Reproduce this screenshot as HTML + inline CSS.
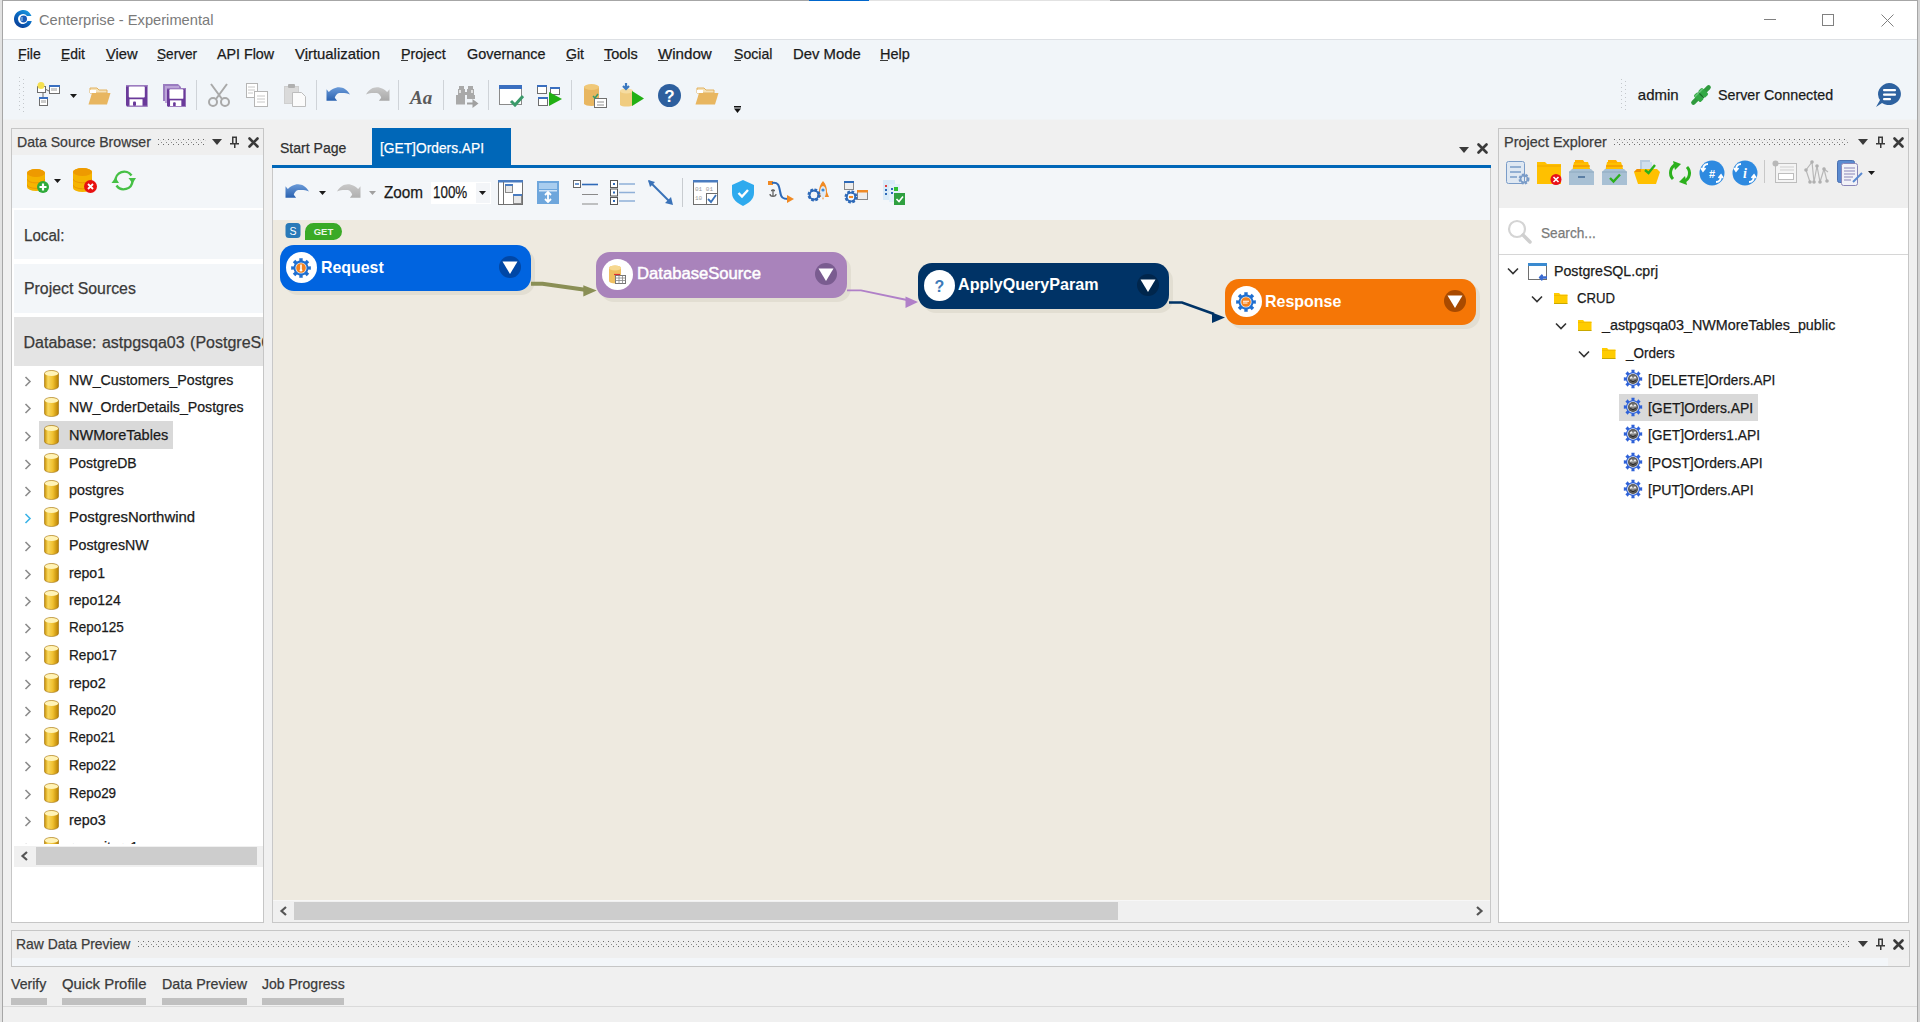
<!DOCTYPE html><html><head><meta charset="utf-8"><title>Centerprise - Experimental</title><style>
html,body{margin:0;padding:0;width:1920px;height:1022px;overflow:hidden;background:#f0f0f0;font-family:"Liberation Sans",sans-serif}
.r{position:absolute;display:block}
.t{position:absolute;white-space:nowrap;font-family:"Liberation Sans",sans-serif;-webkit-text-stroke:0.25px currentColor}
</style></head><body>
<div class="r" style="left:0px;top:0px;width:1920px;height:1022px;background:#f0f0f0;"></div>
<div class="r" style="left:0px;top:0px;width:2px;height:1022px;background:#e2e2e2;"></div>
<div class="r" style="left:2px;top:0px;width:1px;height:1022px;background:#a6a6a6;"></div>
<div class="r" style="left:1918px;top:0px;width:2px;height:1022px;background:#d4d4d4;"></div>
<div class="r" style="left:1917px;top:0px;width:1px;height:1022px;background:#a6a6a6;"></div>
<div class="r" style="left:3px;top:0px;width:1914px;height:1px;background:#a6a6a6;"></div>
<div class="r" style="left:809px;top:0px;width:60px;height:1px;background:#0066cc;"></div>
<div class="r" style="left:869px;top:0px;width:241px;height:1px;background:#e2e2e2;"></div>
<div class="r" style="left:3px;top:1px;width:1914px;height:38px;background:#ffffff;"></div>
<div class="r" style="left:3px;top:39px;width:1914px;height:1px;background:#dde0e4;"></div>
<div class="r" style="left:3px;top:40px;width:1914px;height:79px;background:#f1f5f9;"></div>
<div class="r" style="left:3px;top:119px;width:1914px;height:1px;background:#f0f3f5;"></div>
<svg class="r" style="left:14px;top:10px;" width="18" height="18" viewBox="0 0 18 18"><defs><linearGradient id="lg1" x1="1" y1="0" x2="0.3" y2="1"><stop offset="0" stop-color="#22a8e8"/><stop offset="0.5" stop-color="#0a6cc4"/><stop offset="1" stop-color="#0a3f98"/></linearGradient></defs>
<path d="M17.49 6 A9 9 0 1 0 17.77 11 L13.58 11 A5 5 0 1 1 13 6 Z" fill="url(#lg1)"/><circle cx="9.6" cy="9" r="3.4" fill="#1a5cb8"/><path d="M6.8 8 h2 M6.8 10 h2 M8 7 v4" stroke="#8ec0ec" stroke-width="0.8"/></svg>
<div class="t" style="left:38.60px;top:12px;font-size:15px;line-height:15px;color:#7a7a7a;transform:scaleX(0.9775);transform-origin:0 0;-webkit-text-stroke:0;">Centerprise - Experimental</div>
<div class="r" style="left:1764px;top:19px;width:12px;height:1px;background:#808080;"></div>
<div class="r" style="left:1822px;top:14px;width:12px;height:12px;background:transparent;box-sizing:border-box;border:1px solid #808080"></div>
<svg class="r" style="left:1881px;top:14px;" width="13" height="13" viewBox="0 0 13 13"><path d="M0.5 0.5 L12.5 12.5 M12.5 0.5 L0.5 12.5" stroke="#808080" stroke-width="1"/></svg>
<div class="t" style="left:18.00px;top:46px;font-size:15px;line-height:15px;color:#1a1a1a;transform:scaleX(0.9417);transform-origin:0 0;">File</div>
<div class="t" style="left:60.60px;top:46px;font-size:15px;line-height:15px;color:#1a1a1a;transform:scaleX(0.9259);transform-origin:0 0;">Edit</div>
<div class="t" style="left:105.60px;top:46px;font-size:15px;line-height:15px;color:#1a1a1a;transform:scaleX(0.9781);transform-origin:0 0;">View</div>
<div class="t" style="left:156.90px;top:46px;font-size:15px;line-height:15px;color:#1a1a1a;transform:scaleX(0.9091);transform-origin:0 0;">Server</div>
<div class="t" style="left:216.90px;top:46px;font-size:15px;line-height:15px;color:#1a1a1a;transform:scaleX(0.9517);transform-origin:0 0;">API Flow</div>
<div class="t" style="left:294.70px;top:46px;font-size:15px;line-height:15px;color:#1a1a1a;transform:scaleX(0.9919);transform-origin:0 0;">Virtualization</div>
<div class="t" style="left:400.70px;top:46px;font-size:15px;line-height:15px;color:#1a1a1a;transform:scaleX(0.9562);transform-origin:0 0;">Project</div>
<div class="t" style="left:467.20px;top:46px;font-size:15px;line-height:15px;color:#1a1a1a;transform:scaleX(0.9610);transform-origin:0 0;">Governance</div>
<div class="t" style="left:565.60px;top:46px;font-size:15px;line-height:15px;color:#1a1a1a;transform:scaleX(0.9400);transform-origin:0 0;">Git</div>
<div class="t" style="left:604.00px;top:46px;font-size:15px;line-height:15px;color:#1a1a1a;transform:scaleX(0.9657);transform-origin:0 0;">Tools</div>
<div class="t" style="left:658.40px;top:46px;font-size:15px;line-height:15px;color:#1a1a1a;transform:scaleX(1.0074);transform-origin:0 0;">Window</div>
<div class="t" style="left:733.50px;top:46px;font-size:15px;line-height:15px;color:#1a1a1a;transform:scaleX(0.9390);transform-origin:0 0;">Social</div>
<div class="t" style="left:792.60px;top:46px;font-size:15px;line-height:15px;color:#1a1a1a;transform:scaleX(0.9912);transform-origin:0 0;">Dev Mode</div>
<div class="t" style="left:879.80px;top:46px;font-size:15px;line-height:15px;color:#1a1a1a;transform:scaleX(0.9677);transform-origin:0 0;">Help</div>
<div class="r" style="left:18px;top:60px;width:7px;height:1px;background:#3a3a3a;"></div>
<div class="r" style="left:61px;top:60px;width:7px;height:1px;background:#3a3a3a;"></div>
<div class="r" style="left:106px;top:60px;width:8px;height:1px;background:#3a3a3a;"></div>
<div class="r" style="left:157px;top:60px;width:7px;height:1px;background:#3a3a3a;"></div>
<div class="r" style="left:304px;top:60px;width:5px;height:1px;background:#3a3a3a;"></div>
<div class="r" style="left:401px;top:60px;width:7px;height:1px;background:#3a3a3a;"></div>
<div class="r" style="left:566px;top:60px;width:7px;height:1px;background:#3a3a3a;"></div>
<div class="r" style="left:604px;top:60px;width:7px;height:1px;background:#3a3a3a;"></div>
<div class="r" style="left:658px;top:60px;width:10px;height:1px;background:#3a3a3a;"></div>
<div class="r" style="left:734px;top:60px;width:7px;height:1px;background:#3a3a3a;"></div>
<div class="r" style="left:880px;top:60px;width:8px;height:1px;background:#3a3a3a;"></div>
<svg class="r" style="left:19px;top:77px;" width="6" height="36" viewBox="0 0 6 36"><rect x="0" y="0" width="1" height="1" fill="#c4c8cc"/><rect x="4" y="2" width="1" height="1" fill="#c4c8cc"/><rect x="0" y="4" width="1" height="1" fill="#c4c8cc"/><rect x="4" y="6" width="1" height="1" fill="#c4c8cc"/><rect x="0" y="8" width="1" height="1" fill="#c4c8cc"/><rect x="4" y="10" width="1" height="1" fill="#c4c8cc"/><rect x="0" y="12" width="1" height="1" fill="#c4c8cc"/><rect x="4" y="14" width="1" height="1" fill="#c4c8cc"/><rect x="0" y="16" width="1" height="1" fill="#c4c8cc"/><rect x="4" y="18" width="1" height="1" fill="#c4c8cc"/><rect x="0" y="20" width="1" height="1" fill="#c4c8cc"/><rect x="4" y="22" width="1" height="1" fill="#c4c8cc"/><rect x="0" y="24" width="1" height="1" fill="#c4c8cc"/><rect x="4" y="26" width="1" height="1" fill="#c4c8cc"/><rect x="0" y="28" width="1" height="1" fill="#c4c8cc"/><rect x="4" y="30" width="1" height="1" fill="#c4c8cc"/><rect x="0" y="32" width="1" height="1" fill="#c4c8cc"/><rect x="4" y="34" width="1" height="1" fill="#c4c8cc"/></svg>
<div class="r" style="left:196px;top:80px;width:1px;height:30px;background:#cfd3d8;"></div>
<div class="r" style="left:316px;top:80px;width:1px;height:30px;background:#cfd3d8;"></div>
<div class="r" style="left:398px;top:80px;width:1px;height:30px;background:#cfd3d8;"></div>
<div class="r" style="left:443px;top:80px;width:1px;height:30px;background:#cfd3d8;"></div>
<div class="r" style="left:488px;top:80px;width:1px;height:30px;background:#cfd3d8;"></div>
<div class="r" style="left:571px;top:80px;width:1px;height:30px;background:#cfd3d8;"></div>
<svg class="r" style="left:37px;top:82px;" width="24" height="24" viewBox="0 0 24 24"><rect x="0.5" y="4.5" width="8" height="6" fill="#fff" stroke="#6e6e6e"/>
<rect x="12.5" y="3.5" width="10" height="8" fill="#fff" stroke="#6e6e6e"/><rect x="12" y="3" width="11" height="2" fill="#3a6fc0"/>
<rect x="2.5" y="15.5" width="8" height="8" fill="#fff" stroke="#6e6e6e"/><rect x="2" y="15" width="9" height="2" fill="#3a6fc0"/>
<path d="M8 7 L12 9 M6 11 V15" stroke="#6e6e6e"/>
<circle cx="4" cy="3.5" r="3.5" fill="#f5e050"/><rect x="14" y="6" width="6" height="3" fill="#ccc"/><rect x="4" y="18" width="5" height="3" fill="#ccc"/></svg>
<svg class="r" style="left:70px;top:94px;" width="7" height="4" viewBox="0 0 7 4"><path d="M0 0 H7 L3.5 4 Z" fill="#1a1a1a"/></svg>
<svg class="r" style="left:88px;top:86px;" width="23" height="19" viewBox="0 0 23 19"><path d="M2 2 h7 l2 2 h8 v3 H2 Z" fill="#f6e2b8" stroke="#e2b260" stroke-width="1"/>
<path d="M0.5 18.5 L4 7 H22.5 L19 18.5 Z" fill="#e8b660"/><path d="M2 4 h6 v3 h-6z" fill="#fff"/></svg>
<svg class="r" style="left:125.5px;top:84.75px;" width="23" height="23" viewBox="0 0 23 23"><g transform="scale(1.0000)"><path d="M0 0 H21.5 V21.75 H2 A2 2 0 0 1 0 19.75 Z" fill="#6a3a9a"/><rect x="0" y="0" width="21.5" height="1.5" fill="#9c7cc0"/>
<rect x="2.8" y="1.5" width="16" height="11" rx="1" fill="#fff"/><rect x="3.5" y="14.25" width="13" height="6.5" fill="#fff"/><rect x="7" y="16.5" width="3" height="4.5" rx="1" fill="#6a3a9a"/><rect x="2" y="20.75" width="19.5" height="1" fill="#a98bc8"/></g></svg>
<svg class="r" style="left:163px;top:84px;" width="22" height="20" viewBox="0 0 22 20"><path d="M0 0 H15 L18 3 V17 H0 Z" fill="#9a7cc0"/><path d="M2 2 H16 V19 H2 Z" fill="#bba4d8"/></svg>
<svg class="r" style="left:167px;top:87.9px;" width="23" height="23" viewBox="0 0 23 23"><g transform="scale(0.8698)"><path d="M0 0 H21.5 V21.75 H2 A2 2 0 0 1 0 19.75 Z" fill="#6a3a9a"/><rect x="0" y="0" width="21.5" height="1.5" fill="#9c7cc0"/>
<rect x="2.8" y="1.5" width="16" height="11" rx="1" fill="#fff"/><rect x="3.5" y="14.25" width="13" height="6.5" fill="#fff"/><rect x="7" y="16.5" width="3" height="4.5" rx="1" fill="#6a3a9a"/><rect x="2" y="20.75" width="19.5" height="1" fill="#a98bc8"/></g></svg>
<svg class="r" style="left:207px;top:83px;" width="24" height="24" viewBox="0 0 24 24"><g stroke="#a9a9a9" stroke-width="2" fill="none"><path d="M4 1 L15 16 M20 1 L9 16"/><circle cx="6" cy="19" r="4"/><circle cx="18" cy="19" r="4"/></g></svg>
<svg class="r" style="left:246px;top:83px;" width="22" height="24" viewBox="0 0 22 24"><g fill="#fff" stroke="#b5b5b5"><rect x="0.5" y="0.5" width="11" height="14"/><rect x="8.5" y="8.5" width="13" height="15"/></g>
<g stroke="#c8c8c8"><path d="M2 4h7M2 7h7M2 10h5M11 13h8M11 16h8M11 19h8"/></g></svg>
<svg class="r" style="left:284px;top:84px;" width="22" height="23" viewBox="0 0 22 23"><rect x="0.5" y="2.5" width="14" height="17" fill="#dadada" stroke="#cfcfcf"/><rect x="4" y="0" width="7" height="4" rx="1" fill="#b0b0b0"/>
<path d="M8.5 8.5 h9 l4 4 v10 h-13 Z" fill="#fbfbfb" stroke="#bdbdbd"/></svg>
<svg class="r" style="left:326px;top:86.5px;" width="25" height="16" viewBox="0 0 25 16"><defs><linearGradient id="ug326" x1="0" y1="0" x2="0" y2="1"><stop offset="0" stop-color="#6a9ad8"/><stop offset="1" stop-color="#2a62b0"/></linearGradient></defs><g transform="scale(1,1.0)"><g><path d="M0.5 2.3 L2.8 5 C5 3 9 0.3 13 0.3 C17.5 0.3 21.5 3 24 7.6 C21 6 17 5.8 13.2 6.1 C11 6.5 9.5 8.5 8.8 10.7 L11.1 13.8 H0.5 Z" fill="url(#ug326)"/></g></g></svg>
<svg class="r" style="left:365px;top:86.5px;" width="25" height="16" viewBox="0 0 25 16"><defs><linearGradient id="ug365" x1="0" y1="0" x2="0" y2="1"><stop offset="0" stop-color="#c8c8c8"/><stop offset="1" stop-color="#a8a8a8"/></linearGradient></defs><g transform="scale(1,1.0)"><g transform="translate(25,0) scale(-1,1)"><path d="M0.5 2.3 L2.8 5 C5 3 9 0.3 13 0.3 C17.5 0.3 21.5 3 24 7.6 C21 6 17 5.8 13.2 6.1 C11 6.5 9.5 8.5 8.8 10.7 L11.1 13.8 H0.5 Z" fill="url(#ug365)"/></g></g></svg>
<div class="t" style="left:410px;top:87.5px;font:italic bold 19px/19px 'Liberation Serif',serif;color:#5a5a5a;letter-spacing:0px;-webkit-text-stroke:0">Aa</div>
<svg class="r" style="left:456px;top:86px;" width="23" height="22" viewBox="0 0 23 22"><g fill="#a9a9a9"><rect x="3" y="0" width="5" height="3"/><rect x="12" y="0" width="5" height="3"/><rect x="2" y="3" width="7" height="7"/><rect x="11" y="3" width="7" height="7"/>
<rect x="0" y="9" width="9" height="9.5"/><rect x="11" y="9" width="8" height="4"/><rect x="8" y="6" width="4" height="3"/></g><rect x="3" y="4" width="2" height="3" fill="#e0e0e0"/><rect x="15" y="4" width="2" height="3" fill="#e0e0e0"/>
<path d="M11 17.5 H20" stroke="#a0a0a0" stroke-width="2"/><path d="M16.5 13 L22.5 17.5 L16.5 22 Z" fill="#a0a0a0"/></svg>
<svg class="r" style="left:499px;top:85px;" width="25" height="22" viewBox="0 0 25 22"><rect x="0.5" y="0.5" width="22" height="19" fill="#fff" stroke="#8a8a8a"/><rect x="0" y="0" width="23" height="4" fill="#3a6fc0"/>
<path d="M12 16 L16 20 L24 11" stroke="#3a9a6a" stroke-width="3" fill="none"/></svg>
<svg class="r" style="left:537px;top:85px;" width="25" height="21" viewBox="0 0 25 21"><g fill="#fff" stroke="#6e6e6e"><rect x="0.5" y="0.5" width="9" height="8"/><rect x="13.5" y="2.5" width="9" height="7"/><rect x="1.5" y="12.5" width="9" height="8"/></g>
<rect x="0" y="0" width="10" height="2" fill="#3a6fc0"/><rect x="13" y="2" width="10" height="2" fill="#3a6fc0"/><rect x="1" y="12" width="10" height="2" fill="#3a6fc0"/>
<path d="M12 7 L25 14 L12 21 Z" fill="#22b014"/></svg>
<svg class="r" style="left:584px;top:84px;" width="23" height="24" viewBox="0 0 23 24"><path d="M0 3 A8 3 0 0 1 15 3 V20 A8 3 0 0 1 0 20 Z" fill="#e8b660"/><ellipse cx="7.5" cy="3" rx="7.5" ry="3" fill="#f0c878"/>
<rect x="10.5" y="14.5" width="12" height="9" fill="#fff" stroke="#707070"/><path d="M13 18h7M13 21h7" stroke="#909090"/><path d="M9 12 l2 2 l3 -4" stroke="#3a9a6a" stroke-width="1.5" fill="none"/></svg>
<svg class="r" style="left:620px;top:83px;" width="24" height="24" viewBox="0 0 24 24"><path d="M0 8 A7 2.5 0 0 1 13 8 V22 A7 2.5 0 0 1 0 22 Z" fill="#f0cc80"/><ellipse cx="6.5" cy="8" rx="6.5" ry="2.5" fill="#f6dca0"/>
<path d="M6 0 V6 M3 3 L6 6 L9 3" stroke="#3a78c0" stroke-width="2.2" fill="none"/><path d="M12 8 L24 15.5 L12 23 Z" fill="#22b014"/></svg>
<svg class="r" style="left:658px;top:84px;" width="23" height="23" viewBox="0 0 23 23"><circle cx="11.5" cy="11.5" r="11.5" fill="#2d5f9e"/><text x="11.5" y="18" text-anchor="middle" font-family="Liberation Sans" font-weight="bold" font-size="17" fill="#fff">?</text></svg>
<svg class="r" style="left:695px;top:86px;" width="24" height="19" viewBox="0 0 24 19"><path d="M2 2 h7 l2 2 h8 v3 H2 Z" fill="#f6e2b8" stroke="#e2b260" stroke-width="1"/>
<path d="M0.5 18.5 L4 7 H23.5 L20 18.5 Z" fill="#e8b660"/><path d="M2 4 h6 v3 h-6z" fill="#fff"/></svg>
<svg class="r" style="left:734px;top:106px;" width="7" height="7" viewBox="0 0 7 7"><rect x="0" y="0" width="7" height="1.5" fill="#111"/><path d="M0 2.5 H7 L3.5 7 Z" fill="#111"/></svg>
<svg class="r" style="left:1621px;top:79px;" width="6" height="31" viewBox="0 0 6 31"><rect x="0" y="0" width="1" height="1" fill="#c4c8cc"/><rect x="4" y="2" width="1" height="1" fill="#c4c8cc"/><rect x="0" y="4" width="1" height="1" fill="#c4c8cc"/><rect x="4" y="6" width="1" height="1" fill="#c4c8cc"/><rect x="0" y="8" width="1" height="1" fill="#c4c8cc"/><rect x="4" y="10" width="1" height="1" fill="#c4c8cc"/><rect x="0" y="12" width="1" height="1" fill="#c4c8cc"/><rect x="4" y="14" width="1" height="1" fill="#c4c8cc"/><rect x="0" y="16" width="1" height="1" fill="#c4c8cc"/><rect x="4" y="18" width="1" height="1" fill="#c4c8cc"/><rect x="0" y="20" width="1" height="1" fill="#c4c8cc"/><rect x="4" y="22" width="1" height="1" fill="#c4c8cc"/><rect x="0" y="24" width="1" height="1" fill="#c4c8cc"/><rect x="4" y="26" width="1" height="1" fill="#c4c8cc"/><rect x="0" y="28" width="1" height="1" fill="#c4c8cc"/><rect x="4" y="30" width="1" height="1" fill="#c4c8cc"/></svg>
<div class="t" style="left:1637.80px;top:87px;font-size:15px;line-height:15px;color:#1a1a1a;">admin</div>
<svg class="r" style="left:1690px;top:84px;" width="22" height="22" viewBox="0 0 22 22"><g transform="rotate(-45 11 11)"><rect x="-2" y="8.8" width="26" height="4.4" rx="2.2" fill="#2f9a3e"/><rect x="5" y="6.2" width="5.6" height="9.6" rx="1.5" fill="#32a844"/><rect x="11.4" y="6.2" width="5.6" height="9.6" rx="1.5" fill="#32a844"/>
<rect x="10.4" y="7" width="1.2" height="8" fill="#1a6a2a"/><rect x="5.5" y="7" width="11" height="1.6" fill="#7ad08a" opacity="0.7"/></g></svg>
<div class="t" style="left:1717.50px;top:87px;font-size:15px;line-height:15px;color:#1a1a1a;transform:scaleX(0.9521);transform-origin:0 0;">Server Connected</div>
<svg class="r" style="left:1876px;top:82px;" width="26" height="26" viewBox="0 0 26 26"><path d="M13 1 A12 11 0 1 1 6 21 L0 25 L4 18 A12 11 0 0 1 13 1 Z" fill="#2e62a0"/>
<rect x="7" y="7" width="13" height="2.2" rx="1" fill="#fff"/><rect x="7" y="11.5" width="13" height="2.2" rx="1" fill="#fff"/><rect x="7" y="16" width="8" height="2.2" rx="1" fill="#fff"/></svg>
<div class="r" style="left:12px;top:129px;width:251px;height:26px;background:#efefef;"></div>
<div class="r" style="left:12px;top:155px;width:251px;height:53px;background:#f3f6f9;"></div>
<div class="r" style="left:12px;top:208px;width:251px;height:714px;background:#ffffff;"></div>
<div class="r" style="left:11px;top:128px;width:253px;height:795px;background:transparent;box-sizing:border-box;border:1px solid #c6c6c6"></div>
<div class="t" style="left:16.50px;top:133.5px;font-size:15px;line-height:15px;color:#3c3c3c;transform:scaleX(0.9392);transform-origin:0 0;">Data Source Browser</div>
<svg class="r" style="left:158px;top:139px;" width="48" height="6" viewBox="0 0 48 6"><defs><pattern id="gp1" width="5" height="5" patternUnits="userSpaceOnUse"><rect x="0" y="0" width="1" height="1" fill="#6c6c6c"/><rect x="3" y="3" width="1" height="1" fill="#8a8a8a"/><rect x="2" y="1" width="1" height="1" fill="#d8d8d8"/></pattern></defs><rect x="0" y="0" width="48" height="6" fill="url(#gp1)"/></svg>
<svg class="r" style="left:212px;top:138.5px;" width="10" height="6" viewBox="0 0 10 6"><path d="M0 0 H10 L5 6 Z" fill="#3a3a3a"/></svg>
<svg class="r" style="left:230px;top:135.5px;" width="9" height="12" viewBox="0 0 9 12"><path d="M2 0.5 H7 V7 H9 V8.5 H0 V7 H2 Z M3.5 2 V7 H5.5 V2 Z" fill="#3a3a3a" fill-rule="evenodd"/><rect x="4" y="8" width="1.5" height="4" fill="#3a3a3a"/></svg>
<svg class="r" style="left:247.5px;top:136.5px;" width="11" height="11" viewBox="0 0 11 11"><path d="M1.5 1.5 L9.5 9.5 M9.5 1.5 L1.5 9.5" stroke="#3a3a3a" stroke-width="2.6" stroke-linecap="round"/></svg>
<svg class="r" style="left:27px;top:169px;" width="18" height="22" viewBox="0 0 18 22"><path d="M0 4 A9.0 4 0 0 1 18 4 V18 A9.0 4 0 0 1 0 18 Z" fill="#f5b400"/><ellipse cx="9.0" cy="4" rx="9.0" ry="4" fill="#ee9a00"/>
<path d="M0 9.9 A9.0 4 0 0 0 18 9.9 M0 15.399999999999999 A9.0 4 0 0 0 18 15.399999999999999" stroke="#e89000" stroke-width="0.8" fill="none"/></svg>
<svg class="r" style="left:37px;top:181px;" width="12" height="12" viewBox="0 0 12 12"><circle cx="6" cy="6" r="6" fill="#2eaa3a"/><path d="M6 2.5 V9.5 M2.5 6 H9.5" stroke="#fff" stroke-width="2.2"/></svg>
<svg class="r" style="left:54px;top:179px;" width="7" height="4" viewBox="0 0 7 4"><path d="M0 0 H7 L3.5 4 Z" fill="#1a1a1a"/></svg>
<svg class="r" style="left:73px;top:168px;" width="19" height="24" viewBox="0 0 19 24"><path d="M0 4 A9.5 4 0 0 1 19 4 V20 A9.5 4 0 0 1 0 20 Z" fill="#f5b400"/><ellipse cx="9.5" cy="4" rx="9.5" ry="4" fill="#ee9a00"/>
<path d="M0 10.8 A9.5 4 0 0 0 19 10.8 M0 16.799999999999997 A9.5 4 0 0 0 19 16.799999999999997" stroke="#e89000" stroke-width="0.8" fill="none"/></svg>
<svg class="r" style="left:84px;top:180px;" width="13" height="13" viewBox="0 0 13 13"><circle cx="6.5" cy="6.5" r="6.5" fill="#e81010"/><path d="M4 4 L9 9 M9 4 L4 9" stroke="#fff" stroke-width="1.8"/></svg>
<svg class="r" style="left:111px;top:169px;" width="26" height="23" viewBox="0 0 26 23"><g fill="none" stroke="#46c046" stroke-width="2.4"><path d="M4.5 12 A8.8 8.8 0 0 1 20.5 6.5"/><path d="M21.5 12 A8.8 8.8 0 0 1 5.5 16.5"/></g>
<path d="M17.5 9 L25 9 L21.5 14.5 Z" fill="#46c046"/><path d="M0.5 14 L8 14 L4.5 8.5 Z" fill="#46c046"/></svg>
<div class="r" style="left:14px;top:210px;width:249px;height:49px;background:#f3f6f9;"></div>
<div class="r" style="left:14px;top:264px;width:249px;height:49px;background:#f3f6f9;"></div>
<div class="r" style="left:14px;top:317px;width:249px;height:49px;background:#e4e4e4;"></div>
<div class="t" style="left:23.50px;top:227.5px;font-size:16px;line-height:16px;color:#3a3a3a;transform:scaleX(0.9465);transform-origin:0 0;">Local:</div>
<div class="t" style="left:23.50px;top:281px;font-size:16px;line-height:16px;color:#3a3a3a;transform:scaleX(0.9903);transform-origin:0 0;">Project Sources</div>
<div class="r" style="left:14px;top:317px;width:249px;height:49px;overflow:hidden">
<div class="t" style="left:9.50px;top:17.5px;font-size:16px;line-height:16px;color:#3a3a3a;word-spacing:1px;">Database: astpgsqa03 (PostgreSQL)</div>
</div>
<div class="r" style="left:12px;top:366px;width:251px;height:478px;overflow:hidden">
<div class="r" style="left:27px;top:55px;width:134px;height:28px;background:#d9d9d9;"></div>
<svg class="r" style="left:12px;top:10px;" width="8" height="11" viewBox="0 0 8 11"><path d="M1.5 1 L6 5.5 L1.5 10" stroke="#8c8c8c" stroke-width="1.6" fill="none"/></svg>
<svg class="r" style="left:32px;top:4px;" width="15" height="20" viewBox="0 0 15 20"><defs><linearGradient id="dbg" x1="0" x2="1"><stop offset="0" stop-color="#c89000"/><stop offset="0.25" stop-color="#f8d860"/><stop offset="0.6" stop-color="#f0c030"/><stop offset="1" stop-color="#b88000"/></linearGradient></defs>
<path d="M0.5 3.5 A7 3 0 0 1 14.5 3.5 V16.5 A7 3 0 0 1 0.5 16.5 Z" fill="url(#dbg)" stroke="#a07010" stroke-width="0.6"/><ellipse cx="7.5" cy="3.5" rx="6.6" ry="2.6" fill="#fff3b8"/></svg>
<div class="t" style="left:56.60px;top:6px;font-size:15px;line-height:15px;color:#1a1a1a;transform:scaleX(0.9480);transform-origin:0 0;">NW_Customers_Postgres</div>
<svg class="r" style="left:12px;top:37px;" width="8" height="11" viewBox="0 0 8 11"><path d="M1.5 1 L6 5.5 L1.5 10" stroke="#8c8c8c" stroke-width="1.6" fill="none"/></svg>
<svg class="r" style="left:32px;top:31px;" width="15" height="20" viewBox="0 0 15 20"><defs><linearGradient id="dbg" x1="0" x2="1"><stop offset="0" stop-color="#c89000"/><stop offset="0.25" stop-color="#f8d860"/><stop offset="0.6" stop-color="#f0c030"/><stop offset="1" stop-color="#b88000"/></linearGradient></defs>
<path d="M0.5 3.5 A7 3 0 0 1 14.5 3.5 V16.5 A7 3 0 0 1 0.5 16.5 Z" fill="url(#dbg)" stroke="#a07010" stroke-width="0.6"/><ellipse cx="7.5" cy="3.5" rx="6.6" ry="2.6" fill="#fff3b8"/></svg>
<div class="t" style="left:56.60px;top:33px;font-size:15px;line-height:15px;color:#1a1a1a;transform:scaleX(0.9438);transform-origin:0 0;">NW_OrderDetails_Postgres</div>
<svg class="r" style="left:12px;top:65px;" width="8" height="11" viewBox="0 0 8 11"><path d="M1.5 1 L6 5.5 L1.5 10" stroke="#8c8c8c" stroke-width="1.6" fill="none"/></svg>
<svg class="r" style="left:32px;top:59px;" width="15" height="20" viewBox="0 0 15 20"><defs><linearGradient id="dbg" x1="0" x2="1"><stop offset="0" stop-color="#c89000"/><stop offset="0.25" stop-color="#f8d860"/><stop offset="0.6" stop-color="#f0c030"/><stop offset="1" stop-color="#b88000"/></linearGradient></defs>
<path d="M0.5 3.5 A7 3 0 0 1 14.5 3.5 V16.5 A7 3 0 0 1 0.5 16.5 Z" fill="url(#dbg)" stroke="#a07010" stroke-width="0.6"/><ellipse cx="7.5" cy="3.5" rx="6.6" ry="2.6" fill="#fff3b8"/></svg>
<div class="t" style="left:56.60px;top:61px;font-size:15px;line-height:15px;color:#1a1a1a;transform:scaleX(0.9680);transform-origin:0 0;">NWMoreTables</div>
<svg class="r" style="left:12px;top:93px;" width="8" height="11" viewBox="0 0 8 11"><path d="M1.5 1 L6 5.5 L1.5 10" stroke="#8c8c8c" stroke-width="1.6" fill="none"/></svg>
<svg class="r" style="left:32px;top:87px;" width="15" height="20" viewBox="0 0 15 20"><defs><linearGradient id="dbg" x1="0" x2="1"><stop offset="0" stop-color="#c89000"/><stop offset="0.25" stop-color="#f8d860"/><stop offset="0.6" stop-color="#f0c030"/><stop offset="1" stop-color="#b88000"/></linearGradient></defs>
<path d="M0.5 3.5 A7 3 0 0 1 14.5 3.5 V16.5 A7 3 0 0 1 0.5 16.5 Z" fill="url(#dbg)" stroke="#a07010" stroke-width="0.6"/><ellipse cx="7.5" cy="3.5" rx="6.6" ry="2.6" fill="#fff3b8"/></svg>
<div class="t" style="left:56.60px;top:89px;font-size:15px;line-height:15px;color:#1a1a1a;transform:scaleX(0.9315);transform-origin:0 0;">PostgreDB</div>
<svg class="r" style="left:12px;top:120px;" width="8" height="11" viewBox="0 0 8 11"><path d="M1.5 1 L6 5.5 L1.5 10" stroke="#8c8c8c" stroke-width="1.6" fill="none"/></svg>
<svg class="r" style="left:32px;top:114px;" width="15" height="20" viewBox="0 0 15 20"><defs><linearGradient id="dbg" x1="0" x2="1"><stop offset="0" stop-color="#c89000"/><stop offset="0.25" stop-color="#f8d860"/><stop offset="0.6" stop-color="#f0c030"/><stop offset="1" stop-color="#b88000"/></linearGradient></defs>
<path d="M0.5 3.5 A7 3 0 0 1 14.5 3.5 V16.5 A7 3 0 0 1 0.5 16.5 Z" fill="url(#dbg)" stroke="#a07010" stroke-width="0.6"/><ellipse cx="7.5" cy="3.5" rx="6.6" ry="2.6" fill="#fff3b8"/></svg>
<div class="t" style="left:56.60px;top:116px;font-size:15px;line-height:15px;color:#1a1a1a;transform:scaleX(0.9552);transform-origin:0 0;">postgres</div>
<svg class="r" style="left:12px;top:147px;" width="8" height="11" viewBox="0 0 8 11"><path d="M1.5 1 L6 5.5 L1.5 10" stroke="#3cb4e8" stroke-width="1.6" fill="none"/></svg>
<svg class="r" style="left:32px;top:141px;" width="15" height="20" viewBox="0 0 15 20"><defs><linearGradient id="dbg" x1="0" x2="1"><stop offset="0" stop-color="#c89000"/><stop offset="0.25" stop-color="#f8d860"/><stop offset="0.6" stop-color="#f0c030"/><stop offset="1" stop-color="#b88000"/></linearGradient></defs>
<path d="M0.5 3.5 A7 3 0 0 1 14.5 3.5 V16.5 A7 3 0 0 1 0.5 16.5 Z" fill="url(#dbg)" stroke="#a07010" stroke-width="0.6"/><ellipse cx="7.5" cy="3.5" rx="6.6" ry="2.6" fill="#fff3b8"/></svg>
<div class="t" style="left:56.60px;top:143px;font-size:15px;line-height:15px;color:#1a1a1a;transform:scaleX(0.9953);transform-origin:0 0;">PostgresNorthwind</div>
<svg class="r" style="left:12px;top:175px;" width="8" height="11" viewBox="0 0 8 11"><path d="M1.5 1 L6 5.5 L1.5 10" stroke="#8c8c8c" stroke-width="1.6" fill="none"/></svg>
<svg class="r" style="left:32px;top:169px;" width="15" height="20" viewBox="0 0 15 20"><defs><linearGradient id="dbg" x1="0" x2="1"><stop offset="0" stop-color="#c89000"/><stop offset="0.25" stop-color="#f8d860"/><stop offset="0.6" stop-color="#f0c030"/><stop offset="1" stop-color="#b88000"/></linearGradient></defs>
<path d="M0.5 3.5 A7 3 0 0 1 14.5 3.5 V16.5 A7 3 0 0 1 0.5 16.5 Z" fill="url(#dbg)" stroke="#a07010" stroke-width="0.6"/><ellipse cx="7.5" cy="3.5" rx="6.6" ry="2.6" fill="#fff3b8"/></svg>
<div class="t" style="left:56.60px;top:171px;font-size:15px;line-height:15px;color:#1a1a1a;transform:scaleX(0.9471);transform-origin:0 0;">PostgresNW</div>
<svg class="r" style="left:12px;top:203px;" width="8" height="11" viewBox="0 0 8 11"><path d="M1.5 1 L6 5.5 L1.5 10" stroke="#8c8c8c" stroke-width="1.6" fill="none"/></svg>
<svg class="r" style="left:32px;top:197px;" width="15" height="20" viewBox="0 0 15 20"><defs><linearGradient id="dbg" x1="0" x2="1"><stop offset="0" stop-color="#c89000"/><stop offset="0.25" stop-color="#f8d860"/><stop offset="0.6" stop-color="#f0c030"/><stop offset="1" stop-color="#b88000"/></linearGradient></defs>
<path d="M0.5 3.5 A7 3 0 0 1 14.5 3.5 V16.5 A7 3 0 0 1 0.5 16.5 Z" fill="url(#dbg)" stroke="#a07010" stroke-width="0.6"/><ellipse cx="7.5" cy="3.5" rx="6.6" ry="2.6" fill="#fff3b8"/></svg>
<div class="t" style="left:56.60px;top:199px;font-size:15px;line-height:15px;color:#1a1a1a;transform:scaleX(0.9395);transform-origin:0 0;">repo1</div>
<svg class="r" style="left:12px;top:230px;" width="8" height="11" viewBox="0 0 8 11"><path d="M1.5 1 L6 5.5 L1.5 10" stroke="#8c8c8c" stroke-width="1.6" fill="none"/></svg>
<svg class="r" style="left:32px;top:224px;" width="15" height="20" viewBox="0 0 15 20"><defs><linearGradient id="dbg" x1="0" x2="1"><stop offset="0" stop-color="#c89000"/><stop offset="0.25" stop-color="#f8d860"/><stop offset="0.6" stop-color="#f0c030"/><stop offset="1" stop-color="#b88000"/></linearGradient></defs>
<path d="M0.5 3.5 A7 3 0 0 1 14.5 3.5 V16.5 A7 3 0 0 1 0.5 16.5 Z" fill="url(#dbg)" stroke="#a07010" stroke-width="0.6"/><ellipse cx="7.5" cy="3.5" rx="6.6" ry="2.6" fill="#fff3b8"/></svg>
<div class="t" style="left:56.60px;top:226px;font-size:15px;line-height:15px;color:#1a1a1a;transform:scaleX(0.9400);transform-origin:0 0;">repo124</div>
<svg class="r" style="left:12px;top:257px;" width="8" height="11" viewBox="0 0 8 11"><path d="M1.5 1 L6 5.5 L1.5 10" stroke="#8c8c8c" stroke-width="1.6" fill="none"/></svg>
<svg class="r" style="left:32px;top:251px;" width="15" height="20" viewBox="0 0 15 20"><defs><linearGradient id="dbg" x1="0" x2="1"><stop offset="0" stop-color="#c89000"/><stop offset="0.25" stop-color="#f8d860"/><stop offset="0.6" stop-color="#f0c030"/><stop offset="1" stop-color="#b88000"/></linearGradient></defs>
<path d="M0.5 3.5 A7 3 0 0 1 14.5 3.5 V16.5 A7 3 0 0 1 0.5 16.5 Z" fill="url(#dbg)" stroke="#a07010" stroke-width="0.6"/><ellipse cx="7.5" cy="3.5" rx="6.6" ry="2.6" fill="#fff3b8"/></svg>
<div class="t" style="left:56.60px;top:253px;font-size:15px;line-height:15px;color:#1a1a1a;transform:scaleX(0.9000);transform-origin:0 0;">Repo125</div>
<svg class="r" style="left:12px;top:285px;" width="8" height="11" viewBox="0 0 8 11"><path d="M1.5 1 L6 5.5 L1.5 10" stroke="#8c8c8c" stroke-width="1.6" fill="none"/></svg>
<svg class="r" style="left:32px;top:279px;" width="15" height="20" viewBox="0 0 15 20"><defs><linearGradient id="dbg" x1="0" x2="1"><stop offset="0" stop-color="#c89000"/><stop offset="0.25" stop-color="#f8d860"/><stop offset="0.6" stop-color="#f0c030"/><stop offset="1" stop-color="#b88000"/></linearGradient></defs>
<path d="M0.5 3.5 A7 3 0 0 1 14.5 3.5 V16.5 A7 3 0 0 1 0.5 16.5 Z" fill="url(#dbg)" stroke="#a07010" stroke-width="0.6"/><ellipse cx="7.5" cy="3.5" rx="6.6" ry="2.6" fill="#fff3b8"/></svg>
<div class="t" style="left:56.60px;top:281px;font-size:15px;line-height:15px;color:#1a1a1a;transform:scaleX(0.9094);transform-origin:0 0;">Repo17</div>
<svg class="r" style="left:12px;top:313px;" width="8" height="11" viewBox="0 0 8 11"><path d="M1.5 1 L6 5.5 L1.5 10" stroke="#8c8c8c" stroke-width="1.6" fill="none"/></svg>
<svg class="r" style="left:32px;top:307px;" width="15" height="20" viewBox="0 0 15 20"><defs><linearGradient id="dbg" x1="0" x2="1"><stop offset="0" stop-color="#c89000"/><stop offset="0.25" stop-color="#f8d860"/><stop offset="0.6" stop-color="#f0c030"/><stop offset="1" stop-color="#b88000"/></linearGradient></defs>
<path d="M0.5 3.5 A7 3 0 0 1 14.5 3.5 V16.5 A7 3 0 0 1 0.5 16.5 Z" fill="url(#dbg)" stroke="#a07010" stroke-width="0.6"/><ellipse cx="7.5" cy="3.5" rx="6.6" ry="2.6" fill="#fff3b8"/></svg>
<div class="t" style="left:56.60px;top:309px;font-size:15px;line-height:15px;color:#1a1a1a;transform:scaleX(0.9579);transform-origin:0 0;">repo2</div>
<svg class="r" style="left:12px;top:340px;" width="8" height="11" viewBox="0 0 8 11"><path d="M1.5 1 L6 5.5 L1.5 10" stroke="#8c8c8c" stroke-width="1.6" fill="none"/></svg>
<svg class="r" style="left:32px;top:334px;" width="15" height="20" viewBox="0 0 15 20"><defs><linearGradient id="dbg" x1="0" x2="1"><stop offset="0" stop-color="#c89000"/><stop offset="0.25" stop-color="#f8d860"/><stop offset="0.6" stop-color="#f0c030"/><stop offset="1" stop-color="#b88000"/></linearGradient></defs>
<path d="M0.5 3.5 A7 3 0 0 1 14.5 3.5 V16.5 A7 3 0 0 1 0.5 16.5 Z" fill="url(#dbg)" stroke="#a07010" stroke-width="0.6"/><ellipse cx="7.5" cy="3.5" rx="6.6" ry="2.6" fill="#fff3b8"/></svg>
<div class="t" style="left:56.60px;top:336px;font-size:15px;line-height:15px;color:#1a1a1a;transform:scaleX(0.8925);transform-origin:0 0;">Repo20</div>
<svg class="r" style="left:12px;top:367px;" width="8" height="11" viewBox="0 0 8 11"><path d="M1.5 1 L6 5.5 L1.5 10" stroke="#8c8c8c" stroke-width="1.6" fill="none"/></svg>
<svg class="r" style="left:32px;top:361px;" width="15" height="20" viewBox="0 0 15 20"><defs><linearGradient id="dbg" x1="0" x2="1"><stop offset="0" stop-color="#c89000"/><stop offset="0.25" stop-color="#f8d860"/><stop offset="0.6" stop-color="#f0c030"/><stop offset="1" stop-color="#b88000"/></linearGradient></defs>
<path d="M0.5 3.5 A7 3 0 0 1 14.5 3.5 V16.5 A7 3 0 0 1 0.5 16.5 Z" fill="url(#dbg)" stroke="#a07010" stroke-width="0.6"/><ellipse cx="7.5" cy="3.5" rx="6.6" ry="2.6" fill="#fff3b8"/></svg>
<div class="t" style="left:56.60px;top:363px;font-size:15px;line-height:15px;color:#1a1a1a;transform:scaleX(0.8792);transform-origin:0 0;">Repo21</div>
<svg class="r" style="left:12px;top:395px;" width="8" height="11" viewBox="0 0 8 11"><path d="M1.5 1 L6 5.5 L1.5 10" stroke="#8c8c8c" stroke-width="1.6" fill="none"/></svg>
<svg class="r" style="left:32px;top:389px;" width="15" height="20" viewBox="0 0 15 20"><defs><linearGradient id="dbg" x1="0" x2="1"><stop offset="0" stop-color="#c89000"/><stop offset="0.25" stop-color="#f8d860"/><stop offset="0.6" stop-color="#f0c030"/><stop offset="1" stop-color="#b88000"/></linearGradient></defs>
<path d="M0.5 3.5 A7 3 0 0 1 14.5 3.5 V16.5 A7 3 0 0 1 0.5 16.5 Z" fill="url(#dbg)" stroke="#a07010" stroke-width="0.6"/><ellipse cx="7.5" cy="3.5" rx="6.6" ry="2.6" fill="#fff3b8"/></svg>
<div class="t" style="left:56.60px;top:391px;font-size:15px;line-height:15px;color:#1a1a1a;transform:scaleX(0.8925);transform-origin:0 0;">Repo22</div>
<svg class="r" style="left:12px;top:423px;" width="8" height="11" viewBox="0 0 8 11"><path d="M1.5 1 L6 5.5 L1.5 10" stroke="#8c8c8c" stroke-width="1.6" fill="none"/></svg>
<svg class="r" style="left:32px;top:417px;" width="15" height="20" viewBox="0 0 15 20"><defs><linearGradient id="dbg" x1="0" x2="1"><stop offset="0" stop-color="#c89000"/><stop offset="0.25" stop-color="#f8d860"/><stop offset="0.6" stop-color="#f0c030"/><stop offset="1" stop-color="#b88000"/></linearGradient></defs>
<path d="M0.5 3.5 A7 3 0 0 1 14.5 3.5 V16.5 A7 3 0 0 1 0.5 16.5 Z" fill="url(#dbg)" stroke="#a07010" stroke-width="0.6"/><ellipse cx="7.5" cy="3.5" rx="6.6" ry="2.6" fill="#fff3b8"/></svg>
<div class="t" style="left:56.60px;top:419px;font-size:15px;line-height:15px;color:#1a1a1a;transform:scaleX(0.8962);transform-origin:0 0;">Repo29</div>
<svg class="r" style="left:12px;top:450px;" width="8" height="11" viewBox="0 0 8 11"><path d="M1.5 1 L6 5.5 L1.5 10" stroke="#8c8c8c" stroke-width="1.6" fill="none"/></svg>
<svg class="r" style="left:32px;top:444px;" width="15" height="20" viewBox="0 0 15 20"><defs><linearGradient id="dbg" x1="0" x2="1"><stop offset="0" stop-color="#c89000"/><stop offset="0.25" stop-color="#f8d860"/><stop offset="0.6" stop-color="#f0c030"/><stop offset="1" stop-color="#b88000"/></linearGradient></defs>
<path d="M0.5 3.5 A7 3 0 0 1 14.5 3.5 V16.5 A7 3 0 0 1 0.5 16.5 Z" fill="url(#dbg)" stroke="#a07010" stroke-width="0.6"/><ellipse cx="7.5" cy="3.5" rx="6.6" ry="2.6" fill="#fff3b8"/></svg>
<div class="t" style="left:56.60px;top:446px;font-size:15px;line-height:15px;color:#1a1a1a;transform:scaleX(0.9553);transform-origin:0 0;">repo3</div>
<svg class="r" style="left:12px;top:477px;" width="8" height="11" viewBox="0 0 8 11"><path d="M1.5 1 L6 5.5 L1.5 10" stroke="#8c8c8c" stroke-width="1.6" fill="none"/></svg>
<svg class="r" style="left:32px;top:471px;" width="15" height="20" viewBox="0 0 15 20"><defs><linearGradient id="dbg" x1="0" x2="1"><stop offset="0" stop-color="#c89000"/><stop offset="0.25" stop-color="#f8d860"/><stop offset="0.6" stop-color="#f0c030"/><stop offset="1" stop-color="#b88000"/></linearGradient></defs>
<path d="M0.5 3.5 A7 3 0 0 1 14.5 3.5 V16.5 A7 3 0 0 1 0.5 16.5 Z" fill="url(#dbg)" stroke="#a07010" stroke-width="0.6"/><ellipse cx="7.5" cy="3.5" rx="6.6" ry="2.6" fill="#fff3b8"/></svg>
<div class="t" style="left:56.60px;top:473px;font-size:15px;line-height:15px;color:#1a1a1a;transform:scaleX(0.93);transform-origin:0 0;">repository1</div>
</div>
<div class="r" style="left:14px;top:846px;width:249px;height:21px;background:#f0f0f0;"></div>
<div class="r" style="left:36px;top:847px;width:221px;height:18px;background:#cdcdcd;"></div>
<svg class="r" style="left:20px;top:851px;" width="9" height="10" viewBox="0 0 9 10"><path d="M7 1 L2.5 5 L7 9" stroke="#555" stroke-width="2.2" fill="none"/></svg>
<div class="r" style="left:372px;top:128px;width:139px;height:37px;background:#0067b8;"></div>
<div class="t" style="left:279.60px;top:140px;font-size:15px;line-height:15px;color:#303030;transform:scaleX(0.9352);transform-origin:0 0;">Start Page</div>
<div class="t" style="left:380.00px;top:140px;font-size:15px;line-height:15px;color:#ffffff;transform:scaleX(0.9177);transform-origin:0 0;">[GET]Orders.API</div>
<svg class="r" style="left:1459px;top:147px;" width="10" height="6" viewBox="0 0 10 6"><path d="M0 0 H10 L5 6 Z" fill="#3a3a3a"/></svg>
<svg class="r" style="left:1477px;top:143px;" width="11" height="11" viewBox="0 0 11 11"><path d="M1.5 1.5 L9.5 9.5 M9.5 1.5 L1.5 9.5" stroke="#3a3a3a" stroke-width="2.6" stroke-linecap="round"/></svg>
<div class="r" style="left:272px;top:165px;width:1219px;height:3px;background:#0067b8;"></div>
<div class="r" style="left:272px;top:168px;width:1219px;height:755px;background:transparent;box-sizing:border-box;border:1px solid #c8c8c8;border-top:none"></div>
<div class="r" style="left:273px;top:168px;width:1217px;height:52px;background:#f3f6f9;"></div>
<div class="r" style="left:273px;top:220px;width:1217px;height:680px;background:#eeeae0;"></div>
<div class="r" style="left:273px;top:900px;width:1217px;height:1px;background:#f7f7f7;"></div>
<div class="r" style="left:273px;top:901px;width:1217px;height:21px;background:#f0f0f0;"></div>
<div class="r" style="left:294px;top:902px;width:824px;height:18px;background:#cdcdcd;"></div>
<svg class="r" style="left:279px;top:906px;" width="9" height="10" viewBox="0 0 9 10"><path d="M7 1 L2.5 5 L7 9" stroke="#555" stroke-width="2.2" fill="none"/></svg>
<svg class="r" style="left:1475px;top:906px;" width="9" height="10" viewBox="0 0 9 10"><path d="M2 1 L6.5 5 L2 9" stroke="#555" stroke-width="2.2" fill="none"/></svg>
<div class="r" style="left:1499px;top:129px;width:409px;height:79px;background:#efefef;"></div>
<div class="r" style="left:1499px;top:208px;width:409px;height:46px;background:#ffffff;"></div>
<div class="r" style="left:1499px;top:254px;width:409px;height:1px;background:#d6d6d6;"></div>
<div class="r" style="left:1499px;top:255px;width:409px;height:667px;background:#ffffff;"></div>
<div class="r" style="left:1498px;top:128px;width:411px;height:795px;background:transparent;box-sizing:border-box;border:1px solid #c6c6c6"></div>
<div class="t" style="left:1503.50px;top:133.5px;font-size:15px;line-height:15px;color:#3c3c3c;transform:scaleX(0.9626);transform-origin:0 0;">Project Explorer</div>
<svg class="r" style="left:1614px;top:139px;" width="235" height="6" viewBox="0 0 235 6"><defs><pattern id="gp2" width="5" height="5" patternUnits="userSpaceOnUse"><rect x="0" y="0" width="1" height="1" fill="#6c6c6c"/><rect x="3" y="3" width="1" height="1" fill="#8a8a8a"/><rect x="2" y="1" width="1" height="1" fill="#d8d8d8"/></pattern></defs><rect x="0" y="0" width="235" height="6" fill="url(#gp2)"/></svg>
<svg class="r" style="left:1858px;top:138.5px;" width="10" height="6" viewBox="0 0 10 6"><path d="M0 0 H10 L5 6 Z" fill="#3a3a3a"/></svg>
<svg class="r" style="left:1875.5px;top:135.5px;" width="9" height="12" viewBox="0 0 9 12"><path d="M2 0.5 H7 V7 H9 V8.5 H0 V7 H2 Z M3.5 2 V7 H5.5 V2 Z" fill="#3a3a3a" fill-rule="evenodd"/><rect x="4" y="8" width="1.5" height="4" fill="#3a3a3a"/></svg>
<svg class="r" style="left:1893px;top:136.5px;" width="11" height="11" viewBox="0 0 11 11"><path d="M1.5 1.5 L9.5 9.5 M9.5 1.5 L1.5 9.5" stroke="#3a3a3a" stroke-width="2.6" stroke-linecap="round"/></svg>
<div class="t" style="left:1541.00px;top:225.3px;font-size:15px;line-height:15px;color:#7a7a7a;transform:scaleX(0.9117);transform-origin:0 0;">Search...</div>
<svg class="r" style="left:1507px;top:219px;" width="26" height="25" viewBox="0 0 26 25"><circle cx="10" cy="10" r="8" fill="none" stroke="#d4d4d4" stroke-width="2.2"/><path d="M16 16 L23 23" stroke="#cfcfcf" stroke-width="3.5" stroke-linecap="round"/></svg>
<div class="r" style="left:12px;top:931px;width:1897px;height:27px;background:#efefef;"></div>
<div class="r" style="left:12px;top:958px;width:1876px;height:8px;background:#f3f6f9;"></div>
<div class="r" style="left:11px;top:930px;width:1899px;height:37px;background:transparent;box-sizing:border-box;border:1px solid #c6c6c6"></div>
<div class="t" style="left:16.00px;top:936.3px;font-size:15px;line-height:15px;color:#3c3c3c;transform:scaleX(0.9274);transform-origin:0 0;">Raw Data Preview</div>
<svg class="r" style="left:138px;top:941px;" width="1712" height="6" viewBox="0 0 1712 6"><defs><pattern id="gp3" width="5" height="5" patternUnits="userSpaceOnUse"><rect x="0" y="0" width="1" height="1" fill="#6c6c6c"/><rect x="3" y="3" width="1" height="1" fill="#8a8a8a"/><rect x="2" y="1" width="1" height="1" fill="#d8d8d8"/></pattern></defs><rect x="0" y="0" width="1712" height="6" fill="url(#gp3)"/></svg>
<svg class="r" style="left:1858px;top:940.5px;" width="10" height="6" viewBox="0 0 10 6"><path d="M0 0 H10 L5 6 Z" fill="#3a3a3a"/></svg>
<svg class="r" style="left:1876px;top:937.5px;" width="9" height="12" viewBox="0 0 9 12"><path d="M2 0.5 H7 V7 H9 V8.5 H0 V7 H2 Z M3.5 2 V7 H5.5 V2 Z" fill="#3a3a3a" fill-rule="evenodd"/><rect x="4" y="8" width="1.5" height="4" fill="#3a3a3a"/></svg>
<svg class="r" style="left:1893px;top:938.5px;" width="11" height="11" viewBox="0 0 11 11"><path d="M1.5 1.5 L9.5 9.5 M9.5 1.5 L1.5 9.5" stroke="#3a3a3a" stroke-width="2.6" stroke-linecap="round"/></svg>
<div class="t" style="left:10.80px;top:976px;font-size:15px;line-height:15px;color:#3a3a3a;transform:scaleX(0.9421);transform-origin:0 0;">Verify</div>
<div class="r" style="left:11px;top:998px;width:36px;height:7px;background:#c0c0c0;"></div>
<div class="t" style="left:62.40px;top:976px;font-size:15px;line-height:15px;color:#3a3a3a;transform:scaleX(0.9929);transform-origin:0 0;">Quick Profile</div>
<div class="r" style="left:62px;top:998px;width:84px;height:7px;background:#c0c0c0;"></div>
<div class="t" style="left:162.10px;top:976px;font-size:15px;line-height:15px;color:#3a3a3a;transform:scaleX(0.9528);transform-origin:0 0;">Data Preview</div>
<div class="r" style="left:162px;top:998px;width:85px;height:7px;background:#c0c0c0;"></div>
<div class="t" style="left:261.70px;top:976px;font-size:15px;line-height:15px;color:#3a3a3a;transform:scaleX(0.9352);transform-origin:0 0;">Job Progress</div>
<div class="r" style="left:262px;top:998px;width:82px;height:7px;background:#c0c0c0;"></div>
<div class="r" style="left:3px;top:1006px;width:1914px;height:1px;background:#dadada;"></div>
<svg class="r" style="left:285px;top:184px;" width="25" height="16" viewBox="0 0 25 16"><defs><linearGradient id="ug285" x1="0" y1="0" x2="0" y2="1"><stop offset="0" stop-color="#6a9ad8"/><stop offset="1" stop-color="#2a62b0"/></linearGradient></defs><g transform="scale(1,1.0)"><g><path d="M0.5 2.3 L2.8 5 C5 3 9 0.3 13 0.3 C17.5 0.3 21.5 3 24 7.6 C21 6 17 5.8 13.2 6.1 C11 6.5 9.5 8.5 8.8 10.7 L11.1 13.8 H0.5 Z" fill="url(#ug285)"/></g></g></svg>
<svg class="r" style="left:319px;top:191px;" width="7" height="4" viewBox="0 0 7 4"><path d="M0 0 H7 L3.5 4 Z" fill="#1a1a1a"/></svg>
<svg class="r" style="left:336px;top:184px;" width="25" height="16" viewBox="0 0 25 16"><defs><linearGradient id="ug336" x1="0" y1="0" x2="0" y2="1"><stop offset="0" stop-color="#c8c8c8"/><stop offset="1" stop-color="#b0b0b0"/></linearGradient></defs><g transform="scale(1,1.0)"><g transform="translate(25,0) scale(-1,1)"><path d="M0.5 2.3 L2.8 5 C5 3 9 0.3 13 0.3 C17.5 0.3 21.5 3 24 7.6 C21 6 17 5.8 13.2 6.1 C11 6.5 9.5 8.5 8.8 10.7 L11.1 13.8 H0.5 Z" fill="url(#ug336)"/></g></g></svg>
<svg class="r" style="left:369px;top:191px;" width="7" height="4" viewBox="0 0 7 4"><path d="M0 0 H7 L3.5 4 Z" fill="#a0a0a0"/></svg>
<div class="t" style="left:384.20px;top:185px;font-size:16px;line-height:16px;color:#1a1a1a;transform:scaleX(0.9561);transform-origin:0 0;">Zoom</div>
<div class="r" style="left:431px;top:182px;width:60px;height:22px;background:#ffffff;"></div>
<div class="r" style="left:476px;top:183px;width:14px;height:20px;background:#f3f5f8;"></div>
<div class="t" style="left:432.50px;top:185px;font-size:16px;line-height:16px;color:#1a1a1a;transform:scaleX(0.8366);transform-origin:0 0;">100%</div>
<svg class="r" style="left:479px;top:191px;" width="7" height="4" viewBox="0 0 7 4"><path d="M0 0 H7 L3.5 4 Z" fill="#1a1a1a"/></svg>
<svg class="r" style="left:498px;top:180px;" width="25" height="25" viewBox="0 0 25 25"><rect x="0.5" y="0.5" width="24" height="24" fill="#fff" stroke="#707070"/><rect x="0" y="0" width="25" height="2.5" fill="#4a7cc0"/>
<path d="M5.5 2 V24" stroke="#707070"/><rect x="7.5" y="4.5" width="7" height="8" fill="#e8e8e8" stroke="#8a8a8a"/><rect x="7" y="4" width="8" height="2" fill="#4a7cc0"/>
<rect x="15.5" y="14.5" width="8" height="9" fill="#e8e8e8" stroke="#8a8a8a"/><rect x="15" y="14" width="9" height="2" fill="#4a7cc0"/></svg>
<svg class="r" style="left:537px;top:181px;" width="22" height="23" viewBox="0 0 22 23"><rect x="0" y="0" width="22" height="23" fill="#6ea6dc"/><rect x="2" y="2" width="18" height="6" fill="#a9cdef"/><rect x="2" y="9" width="18" height="1.5" fill="#cfe3f7"/>
<path d="M11 11 V21 M8 14 L11 11 L14 14 M8 18 L11 21 L14 18" stroke="#fff" stroke-width="1.8" fill="none"/></svg>
<svg class="r" style="left:573px;top:180px;" width="26" height="25" viewBox="0 0 26 25"><rect x="0.5" y="0.5" width="7" height="7" fill="#fff" stroke="#666"/><path d="M2 4 H6" stroke="#2e6ab8" stroke-width="1.4"/>
<path d="M9 4.5 H25" stroke="#2e6ab8" stroke-width="1.6"/><path d="M9 14.5 H25 M9 24 H25" stroke="#8a8a8a" stroke-width="1.2"/></svg>
<svg class="r" style="left:610px;top:180px;" width="26" height="25" viewBox="0 0 26 25"><g fill="#fff" stroke="#555"><rect x="0.5" y="0.5" width="7" height="7"/><rect x="0.5" y="9" width="7" height="7"/><rect x="0.5" y="17.5" width="7" height="7"/></g>
<g fill="#2e6ab8"><rect x="3" y="3" width="2" height="2"/><rect x="3" y="11.5" width="2" height="2"/><rect x="3" y="20" width="2" height="2"/></g>
<path d="M9 4 H25 M9 12.5 H25 M9 21 H25" stroke="#8fb0d8" stroke-width="1.6"/></svg>
<svg class="r" style="left:648px;top:180px;" width="25" height="25" viewBox="0 0 25 25"><path d="M1 1 L22 22" stroke="#3a72b8" stroke-width="2"/><path d="M0 0 L7 2 L2 7 Z M25 25 L17 23 L23 17 Z" fill="#3a72b8"/></svg>
<div class="r" style="left:682px;top:178px;width:1px;height:29px;background:#c8ccd0;"></div>
<svg class="r" style="left:693px;top:180px;" width="25" height="25" viewBox="0 0 25 25"><rect x="0.5" y="0.5" width="24" height="24" fill="#fff" stroke="#6e6e6e"/><rect x="0" y="0" width="25" height="2.5" fill="#4a7cc0"/>
<text x="2" y="11" font-family="Liberation Mono" font-size="6" fill="#999">01 01</text><text x="2" y="20" font-family="Liberation Mono" font-size="6" fill="#999">10</text>
<rect x="13.5" y="13.5" width="11" height="11" fill="#fff" stroke="#6e6e6e"/><path d="M15 19 L18 22 L23 15" stroke="#3a72b8" stroke-width="1.8" fill="none"/></svg>
<svg class="r" style="left:732px;top:180px;" width="22" height="26" viewBox="0 0 22 26"><path d="M11 0 L22 5 V13 C22 19 17 23 11 26 C5 23 0 19 0 13 V5 Z" fill="#2eaaee"/><path d="M6.5 13 L10 16.5 L16 10" stroke="#fff" stroke-width="2.4" fill="none"/></svg>
<svg class="r" style="left:768px;top:181px;" width="26" height="22" viewBox="0 0 26 22"><rect x="0" y="0" width="5" height="4" fill="#f08a24"/><path d="M4 2 C10 1 11 4 12 10 C13 17 15 18 20 18" stroke="#2e6ab8" stroke-width="2" fill="none"/><path d="M19 14 L26 18 L19 22 Z" fill="#f08a24"/>
<path d="M5 8 V16 M2 13 C2 16 8 16 8 13 M3 9.5 H7" stroke="#666" stroke-width="1.3" fill="none"/></svg>
<svg class="r" style="left:807px;top:181px;" width="23" height="23" viewBox="0 0 23 23"><path d="M16 0 C19 3 20 7 20 11 L22 16 H17 L16 19 L15 16 H10 L12 11 C12 7 13 3 16 0 Z" fill="#f08a24"/><ellipse cx="16" cy="11" rx="3" ry="6" fill="#dfeaf6"/><circle cx="16" cy="9" r="1.6" fill="#3a8ad8"/>
<circle cx="7" cy="14" r="5" fill="none" stroke="#2e6ab8" stroke-width="3" stroke-dasharray="2.5 1.4"/><circle cx="7" cy="14" r="4.5" fill="none" stroke="#2e6ab8" stroke-width="1.8"/></svg>
<svg class="r" style="left:844px;top:181px;" width="24" height="23" viewBox="0 0 24 23"><rect x="0.5" y="0.5" width="9" height="8" fill="#eee" stroke="#888"/><rect x="0" y="0" width="10" height="2" fill="#2e6ab8"/>
<rect x="13.5" y="9.5" width="10" height="9" fill="#eee" stroke="#888"/><rect x="13" y="9" width="11" height="2.5" fill="#f08a24"/>
<circle cx="7" cy="16" r="5" fill="none" stroke="#2e6ab8" stroke-width="3" stroke-dasharray="2.5 1.4"/><circle cx="7" cy="16" r="4.3" fill="none" stroke="#2e6ab8" stroke-width="1.8"/><rect x="5" y="15" width="4" height="2" fill="#f08a24"/></svg>
<svg class="r" style="left:883px;top:180px;" width="22" height="25" viewBox="0 0 22 25"><rect x="0" y="0" width="12" height="20" fill="#d8ebf8"/><rect x="6" y="4" width="11" height="18" fill="#e2f0fa"/>
<g fill="#2e6ab8"><rect x="2" y="5" width="2" height="2"/><rect x="2" y="9" width="2" height="2"/><rect x="2" y="13" width="2" height="2"/><rect x="8" y="8" width="2" height="2"/><rect x="8" y="12" width="2" height="2"/></g>
<rect x="2" y="5" width="2" height="2" fill="#e04040"/><rect x="11" y="7" width="4" height="4" fill="#2ec030"/>
<rect x="11" y="13" width="11" height="12" fill="#2ea040"/><path d="M13.5 19 L16 21.5 L20 16.5" stroke="#fff" stroke-width="1.6" fill="none"/></svg>
<svg class="r" style="left:285px;top:222px;" width="16" height="16" viewBox="0 0 16 16"><rect x="0.5" y="1" width="15" height="15" rx="3.5" fill="#2a7ab8"/><text x="8" y="12.5" text-anchor="middle" font-family="Liberation Sans" font-size="10.5" fill="#fff">S</text></svg>
<svg class="r" style="left:305px;top:223px;" width="37" height="17" viewBox="0 0 37 17"><path d="M8.5 0 H28.5 A8.5 8.5 0 0 1 28.5 17 H0 V8.5 A8.5 8.5 0 0 1 8.5 0 Z" fill="#3aaa26"/><text x="18.5" y="12.3" text-anchor="middle" font-family="Liberation Sans" font-weight="bold" font-size="9.5" fill="#eaf6e6">GET</text></svg>
<div class="r" style="left:284px;top:249px;width:251px;height:46px;background:#e2ded2;border-radius:14px"></div>
<div class="r" style="left:280px;top:245px;width:251px;height:46px;background:#0064e0;border-radius:14px"></div>
<svg class="r" style="left:285.5px;top:252px;" width="31" height="31" viewBox="0 0 31 31"><circle cx="15.5" cy="15.5" r="15.5" fill="#fff"/><path d="M13.40 8.57 L13.24 6.16 L16.76 6.16 L16.60 8.57 L19.12 9.62 L20.72 7.80 L23.20 10.28 L21.38 11.88 L22.43 14.40 L24.84 14.24 L24.84 17.76 L22.43 17.60 L21.38 20.12 L23.20 21.72 L20.72 24.20 L19.12 22.38 L16.60 23.43 L16.76 25.84 L13.24 25.84 L13.40 23.43 L10.88 22.38 L9.28 24.20 L6.80 21.72 L8.62 20.12 L7.57 17.60 L5.16 17.76 L5.16 14.24 L7.57 14.40 L8.62 11.88 L6.80 10.28 L9.28 7.80 L10.88 9.62 Z" fill="#1f6fd0"/><circle cx="15" cy="16" r="5.6" fill="#e8f0f8"/><circle cx="15" cy="16" r="4.8" fill="#f4821e"/><path d="M15 12.5 V17.5" stroke="#fff" stroke-width="1.6"/><circle cx="15" cy="18.3" r="1.3" fill="#fff"/></svg>
<div class="t" style="left:321.30px;top:259px;font-size:17px;line-height:17px;color:#ffffff;font-weight:bold;transform:scaleX(0.9358);transform-origin:0 0;-webkit-text-stroke:0;">Request</div>
<svg class="r" style="left:499px;top:256px;" width="22" height="22" viewBox="0 0 22 22"><circle cx="11" cy="11" r="11" fill="#0047a6"/><path d="M3.5 5.5 H18.5 L11 18 Z" fill="#fff"/></svg>
<div class="r" style="left:600px;top:256px;width:251px;height:46px;background:#e2ded2;border-radius:14px"></div>
<div class="r" style="left:596px;top:252px;width:251px;height:46px;background:#a983bb;border-radius:14px"></div>
<svg class="r" style="left:601.5px;top:259px;" width="31" height="31" viewBox="0 0 31 31"><circle cx="15.5" cy="15.5" r="15.5" fill="#fff"/><path d="M7 9 A6 2.5 0 0 1 19 9 V22 A6 2.5 0 0 1 7 22 Z" fill="#f0c060"/><ellipse cx="13" cy="9" rx="6" ry="2.5" fill="#f6d890"/>
<rect x="13.5" y="16.5" width="10" height="8" fill="#fff" stroke="#777"/><path d="M13.5 19 H23.5 M13.5 21.5 H23.5 M17 16.5 V24.5 M20.5 16.5 V24.5" stroke="#888" stroke-width="0.8"/><path d="M12 15.5 H18" stroke="#e03030" stroke-width="1.2"/></svg>
<div class="t" style="left:636.50px;top:264.7px;font-size:17px;line-height:17px;color:#ffffff;transform:scaleX(0.9787);transform-origin:0 0;-webkit-text-stroke:0.5px #fff;">DatabaseSource</div>
<svg class="r" style="left:815px;top:263px;" width="22" height="22" viewBox="0 0 22 22"><circle cx="11" cy="11" r="11" fill="#7a5c90"/><path d="M3.5 5.5 H18.5 L11 18 Z" fill="#fff"/></svg>
<div class="r" style="left:922px;top:267px;width:251px;height:46px;background:#e2ded2;border-radius:14px"></div>
<div class="r" style="left:918px;top:263px;width:251px;height:46px;background:#003366;border-radius:14px"></div>
<svg class="r" style="left:923.5px;top:270px;" width="31" height="31" viewBox="0 0 31 31"><circle cx="15.5" cy="15.5" r="15.5" fill="#fff"/><text x="15.5" y="21.5" text-anchor="middle" font-family="Liberation Sans" font-weight="bold" font-size="16" fill="#3d7ab8">?</text></svg>
<div class="t" style="left:958.30px;top:276px;font-size:17px;line-height:17px;color:#ffffff;font-weight:bold;transform:scaleX(0.9473);transform-origin:0 0;-webkit-text-stroke:0;">ApplyQueryParam</div>
<svg class="r" style="left:1137px;top:274px;" width="22" height="22" viewBox="0 0 22 22"><circle cx="11" cy="11" r="11" fill="#00264c"/><path d="M3.5 5.5 H18.5 L11 18 Z" fill="#fff"/></svg>
<div class="r" style="left:1229px;top:283px;width:251px;height:46px;background:#e2ded2;border-radius:14px"></div>
<div class="r" style="left:1225px;top:279px;width:251px;height:46px;background:#f57606;border-radius:14px"></div>
<svg class="r" style="left:1230.5px;top:286px;" width="31" height="31" viewBox="0 0 31 31"><circle cx="15.5" cy="15.5" r="15.5" fill="#fff"/><path d="M13.40 8.57 L13.24 6.16 L16.76 6.16 L16.60 8.57 L19.12 9.62 L20.72 7.80 L23.20 10.28 L21.38 11.88 L22.43 14.40 L24.84 14.24 L24.84 17.76 L22.43 17.60 L21.38 20.12 L23.20 21.72 L20.72 24.20 L19.12 22.38 L16.60 23.43 L16.76 25.84 L13.24 25.84 L13.40 23.43 L10.88 22.38 L9.28 24.20 L6.80 21.72 L8.62 20.12 L7.57 17.60 L5.16 17.76 L5.16 14.24 L7.57 14.40 L8.62 11.88 L6.80 10.28 L9.28 7.80 L10.88 9.62 Z" fill="#1f6fd0"/><circle cx="15" cy="16" r="5.6" fill="#e8f0f8"/><circle cx="15" cy="16" r="4.8" fill="#f4821e"/><path d="M12 15.2 H18 M12 17 H16.5" stroke="#fff" stroke-width="1.1"/></svg>
<div class="t" style="left:1264.50px;top:292.7px;font-size:17px;line-height:17px;color:#ffffff;font-weight:bold;transform:scaleX(0.9395);transform-origin:0 0;-webkit-text-stroke:0;">Response</div>
<svg class="r" style="left:1444px;top:290px;" width="22" height="22" viewBox="0 0 22 22"><circle cx="11" cy="11" r="11" fill="#a84a00"/><path d="M3.5 5.5 H18.5 L11 18 Z" fill="#fff"/></svg>
<svg class="r" style="left:525px;top:275px;" width="80" height="30" viewBox="0 0 80 30"><path d="M6 8.75 H17.5 L60 14.8" stroke="#8a8f55" stroke-width="4" fill="none"/><path d="M71.7 15.6 L58.3 10.2 L58.3 21.5 Z" fill="#8a8f55"/></svg>
<svg class="r" style="left:840px;top:280px;" width="85" height="35" viewBox="0 0 85 35"><path d="M7 10.4 H21 L67 20" stroke="#b080c8" stroke-width="1.8" fill="none"/><path d="M78 22 L65.5 16.6 L65.5 28 Z" fill="#b080c8"/></svg>
<svg class="r" style="left:1160px;top:295px;" width="70" height="30" viewBox="0 0 70 30"><path d="M9 7.5 H22 L54 19" stroke="#003366" stroke-width="2.6" fill="none"/><path d="M65 22.5 L52 17.5 L52 28 Z" fill="#003366"/></svg>
<svg class="r" style="left:1506px;top:161px;" width="24" height="24" viewBox="0 0 24 24"><rect x="0.5" y="0.5" width="18" height="22" rx="2" fill="#dfe8f2" stroke="#7a9cc8"/><path d="M4 6 H15 M4 11 H15 M4 16 H11" stroke="#7a9cc8" stroke-width="1.5"/>
<circle cx="18" cy="18" r="4" fill="none" stroke="#7a9cc8" stroke-width="3" stroke-dasharray="2 1.3"/><circle cx="18" cy="18" r="3.6" fill="none" stroke="#7a9cc8" stroke-width="1.6"/></svg>
<svg class="r" style="left:1537px;top:161px;" width="25" height="24" viewBox="0 0 25 24"><path d="M0 1 H8 L10 3 H24 V23 H0 Z" fill="#ffc000"/><path d="M0 5 H24" stroke="#f0a800" stroke-width="1"/>
<circle cx="19" cy="18.5" r="5.5" fill="#e8101a"/><path d="M16.5 16 L21.5 21 M21.5 16 L16.5 21" stroke="#fff" stroke-width="1.6"/></svg>
<svg class="r" style="left:1569px;top:160px;" width="26" height="25" viewBox="0 0 26 25"><path d="M5 2 H19 L22 12 H3 Z" fill="#ffc000"/><path d="M6 0 H14 L16 3 H6 Z" fill="#ffb000"/><path d="M4 6 H21" stroke="#f09000" stroke-width="1.2"/>
<path d="M0 12 L3 9 H22 L25 12 V25 H0 Z" fill="#a8c0d4"/><path d="M0 12 H25" stroke="#8eaac0"/><rect x="9" y="16" width="7" height="2" fill="#5a7ea4"/></svg>
<svg class="r" style="left:1602px;top:160px;" width="26" height="25" viewBox="0 0 26 25"><path d="M5 2 H19 L22 12 H3 Z" fill="#ffc000"/><path d="M6 0 H14 L16 3 H6 Z" fill="#ffb000"/><path d="M4 6 H21" stroke="#f09000" stroke-width="1.2"/>
<path d="M0 12 L3 9 H22 L25 12 V25 H0 Z" fill="#a8c0d4"/><path d="M0 12 H25" stroke="#8eaac0"/><path d="M8 18 L11.5 21.5 L18 14.5" stroke="#2cb01c" stroke-width="2.4" fill="none"/></svg>
<svg class="r" style="left:1634px;top:160px;" width="26" height="24" viewBox="0 0 26 24"><rect x="6" y="0" width="10" height="13" fill="#b8cce0"/><rect x="8" y="2" width="10" height="12" fill="#d0dfee"/>
<path d="M3 9 H23 L26 12 L22 24 H4 L0 12 Z" fill="#ffc000"/><path d="M3 9 H7 V12 H0 Z" fill="#f09000"/>
<path d="M11 10 L14.5 13 L21 5" stroke="#2cb01c" stroke-width="2.4" fill="none"/></svg>
<svg class="r" style="left:1668px;top:161px;" width="24" height="24" viewBox="0 0 24 24"><g fill="none" stroke="#2cb01c" stroke-width="3"><path d="M5 18 A9 9 0 0 1 8 3.5"/><path d="M19 6 A9 9 0 0 1 16 20.5"/></g>
<path d="M5 0 L13 3 L7 9 Z" fill="#2cb01c"/><path d="M19 24 L11 21 L17 15 Z" fill="#2cb01c"/></svg>
<svg class="r" style="left:1699px;top:160px;" width="26" height="26" viewBox="0 0 26 26"><circle cx="13" cy="13" r="12.5" fill="#2e8ae0"/><path d="M9 4 C5 4 4 7 4 10 M2 8 L4 11 L6.5 8" stroke="#fff" stroke-width="1.8" fill="none"/>
<path d="M17 22 C21 22 22 19 22 16 M19.5 18 L22 15 L24 18" stroke="#fff" stroke-width="1.8" fill="none"/><text x="13" y="17.5" text-anchor="middle" font-family="Liberation Sans" font-weight="bold" font-size="11" fill="#fff">#</text></svg>
<svg class="r" style="left:1732px;top:160px;" width="26" height="26" viewBox="0 0 26 26"><circle cx="13" cy="13" r="12.5" fill="#2e8ae0"/><path d="M9 4 C5 4 4 7 4 10 M2 8 L4 11 L6.5 8" stroke="#fff" stroke-width="1.8" fill="none"/>
<path d="M17 22 C21 22 22 19 22 16 M19.5 18 L22 15 L24 18" stroke="#fff" stroke-width="1.8" fill="none"/><text x="13" y="18" text-anchor="middle" font-family="Liberation Serif" font-style="italic" font-weight="bold" font-size="14" fill="#fff">i</text></svg>
<div class="r" style="left:1764px;top:160px;width:1px;height:23px;background:#c8c8c8;"></div>
<svg class="r" style="left:1772px;top:160px;" width="25" height="24" viewBox="0 0 25 24"><rect x="3.5" y="3.5" width="21" height="19" fill="#f4f4f4" stroke="#bdbdbd"/><path d="M8 7 H22 M8 10 H22" stroke="#cfcfcf"/><rect x="6.5" y="13.5" width="15" height="6" fill="#fff" stroke="#bdbdbd"/>
<circle cx="3.5" cy="3.5" r="3" fill="#b8b8b8"/></svg>
<svg class="r" style="left:1804px;top:160px;" width="26" height="25" viewBox="0 0 26 25"><g stroke="#b8b8b8" stroke-width="1.2" fill="none"><path d="M2 10 L8 2 L10 22 L13 6 L16 22 L20 9 L23 21 M2 10 L6 22 M20 9 L24 12"/></g>
<g fill="#b0b0b0"><circle cx="2" cy="10" r="1.8"/><circle cx="8" cy="2" r="1.8"/><circle cx="10" cy="22" r="1.8"/><circle cx="13" cy="6" r="1.8"/><circle cx="16" cy="22" r="1.8"/><circle cx="20" cy="9" r="1.8"/><circle cx="23" cy="21" r="1.8"/><circle cx="6" cy="22" r="1.8"/></g></svg>
<svg class="r" style="left:1837px;top:160px;" width="26" height="26" viewBox="0 0 26 26"><rect x="0.5" y="0.5" width="17" height="22" rx="2" fill="#5a8ad0" stroke="#4a70b0"/><rect x="4.5" y="3.5" width="16" height="22" rx="2" fill="#f2f2f8" stroke="#8a86b8"/>
<path d="M7 8 H18 M7 11 H18 M7 14 H18 M7 17 H16 M7 20 H14" stroke="#8a86b8" stroke-width="1"/><path d="M16 22 L25 13" stroke="#5a8ad0" stroke-width="2"/></svg>
<svg class="r" style="left:1868px;top:171px;" width="7" height="4" viewBox="0 0 7 4"><path d="M0 0 H7 L3.5 4 Z" fill="#1a1a1a"/></svg>
<svg class="r" style="left:1507px;top:267px;" width="12" height="8" viewBox="0 0 12 8"><path d="M1 1.5 L6 6.5 L11 1.5" stroke="#333" stroke-width="1.6" fill="none"/></svg>
<svg class="r" style="left:1528px;top:263px;" width="20" height="18" viewBox="0 0 20 18"><rect x="0.5" y="0.5" width="18" height="16" fill="#fff" stroke="#707070"/><rect x="0" y="0" width="19" height="3" fill="#3a8ad0"/>
<path d="M19 14.5 H12 M14.5 12 L12 14.5 L14.5 17" stroke="#3a6ad0" stroke-width="1.8" fill="none"/></svg>
<div class="r" style="left:1547px;top:269px;width:2px;height:13px;background:#ffffff;"></div>
<svg class="r" style="left:1528px;top:263px;" width="20" height="18" viewBox="0 0 20 18"><path d="M19 14.5 H12 M14.5 12 L12 14.5 L14.5 17" stroke="#3a6ad0" stroke-width="1.8" fill="none"/></svg>
<div class="t" style="left:1553.70px;top:262.5px;font-size:15px;line-height:15px;color:#1a1a1a;transform:scaleX(0.9455);transform-origin:0 0;">PostgreSQL.cprj</div>
<svg class="r" style="left:1531px;top:295px;" width="12" height="8" viewBox="0 0 12 8"><path d="M1 1.5 L6 6.5 L11 1.5" stroke="#333" stroke-width="1.6" fill="none"/></svg>
<svg class="r" style="left:1554px;top:292px;" width="14" height="12" viewBox="0 0 14 12"><path d="M0 1 H5 L6.5 2.5 H13.5 V11.5 H0 Z" fill="#ffcc00"/><path d="M0 11.5 H13.5" stroke="#c8a800"/><path d="M0 3.5 H13.5" stroke="#f0b800" stroke-width="0.8"/></svg>
<div class="t" style="left:1577.30px;top:290px;font-size:15px;line-height:15px;color:#1a1a1a;transform:scaleX(0.8767);transform-origin:0 0;">CRUD</div>
<svg class="r" style="left:1555px;top:322px;" width="12" height="8" viewBox="0 0 12 8"><path d="M1 1.5 L6 6.5 L11 1.5" stroke="#333" stroke-width="1.6" fill="none"/></svg>
<svg class="r" style="left:1578px;top:319px;" width="14" height="12" viewBox="0 0 14 12"><path d="M0 1 H5 L6.5 2.5 H13.5 V11.5 H0 Z" fill="#ffcc00"/><path d="M0 11.5 H13.5" stroke="#c8a800"/><path d="M0 3.5 H13.5" stroke="#f0b800" stroke-width="0.8"/></svg>
<div class="t" style="left:1602.00px;top:317px;font-size:15px;line-height:15px;color:#1a1a1a;transform:scaleX(0.955);transform-origin:0 0;">_astpgsqa03_NWMoreTables_public</div>
<svg class="r" style="left:1578px;top:350px;" width="12" height="8" viewBox="0 0 12 8"><path d="M1 1.5 L6 6.5 L11 1.5" stroke="#333" stroke-width="1.6" fill="none"/></svg>
<svg class="r" style="left:1602px;top:347px;" width="14" height="12" viewBox="0 0 14 12"><path d="M0 1 H5 L6.5 2.5 H13.5 V11.5 H0 Z" fill="#ffcc00"/><path d="M0 11.5 H13.5" stroke="#c8a800"/><path d="M0 3.5 H13.5" stroke="#f0b800" stroke-width="0.8"/></svg>
<div class="t" style="left:1625.50px;top:345px;font-size:15px;line-height:15px;color:#1a1a1a;transform:scaleX(0.9000);transform-origin:0 0;">_Orders</div>
<div class="r" style="left:1619px;top:394px;width:139px;height:27px;background:#d9d9d9;"></div>
<svg class="r" style="left:1622.5px;top:369px;" width="20" height="20" viewBox="0 0 20 20"><defs><radialGradient id="agr" cx="0.5" cy="0.45" r="0.6"><stop offset="0" stop-color="#9a9a9a"/><stop offset="1" stop-color="#3a3a3a"/></radialGradient></defs>
<path d="M16.86 8.59 L19.16 8.37 L19.16 11.63 L16.86 11.41 L15.85 13.85 L17.63 15.32 L15.32 17.63 L13.85 15.85 L11.41 16.86 L11.63 19.16 L8.37 19.16 L8.59 16.86 L6.15 15.85 L4.68 17.63 L2.37 15.32 L4.15 13.85 L3.14 11.41 L0.84 11.63 L0.84 8.37 L3.14 8.59 L4.15 6.15 L2.37 4.68 L4.68 2.37 L6.15 4.15 L8.59 3.14 L8.37 0.84 L11.63 0.84 L11.41 3.14 L13.85 4.15 L15.32 2.37 L17.63 4.68 L15.85 6.15 Z" fill="#2f62d8"/><circle cx="10" cy="10" r="5.8" fill="#e8eef8"/><circle cx="10" cy="10" r="5" fill="url(#agr)"/>
<path d="M7 9.5 L8.3 8 L9.3 9.5 M10.8 9.5 L12 8 L13.2 9.5" stroke="#f0f0f0" stroke-width="1.2" fill="none"/><path d="M7.3 11.5 Q10 13.8 12.7 11.5" stroke="#222" stroke-width="1" fill="none"/></svg>
<div class="t" style="left:1648.40px;top:372px;font-size:15px;line-height:15px;color:#1a1a1a;transform:scaleX(0.9035);transform-origin:0 0;">[DELETE]Orders.API</div>
<svg class="r" style="left:1622.5px;top:397px;" width="20" height="20" viewBox="0 0 20 20"><defs><radialGradient id="agr" cx="0.5" cy="0.45" r="0.6"><stop offset="0" stop-color="#9a9a9a"/><stop offset="1" stop-color="#3a3a3a"/></radialGradient></defs>
<path d="M16.86 8.59 L19.16 8.37 L19.16 11.63 L16.86 11.41 L15.85 13.85 L17.63 15.32 L15.32 17.63 L13.85 15.85 L11.41 16.86 L11.63 19.16 L8.37 19.16 L8.59 16.86 L6.15 15.85 L4.68 17.63 L2.37 15.32 L4.15 13.85 L3.14 11.41 L0.84 11.63 L0.84 8.37 L3.14 8.59 L4.15 6.15 L2.37 4.68 L4.68 2.37 L6.15 4.15 L8.59 3.14 L8.37 0.84 L11.63 0.84 L11.41 3.14 L13.85 4.15 L15.32 2.37 L17.63 4.68 L15.85 6.15 Z" fill="#2f62d8"/><circle cx="10" cy="10" r="5.8" fill="#e8eef8"/><circle cx="10" cy="10" r="5" fill="url(#agr)"/>
<path d="M7 9.5 L8.3 8 L9.3 9.5 M10.8 9.5 L12 8 L13.2 9.5" stroke="#f0f0f0" stroke-width="1.2" fill="none"/><path d="M7.3 11.5 Q10 13.8 12.7 11.5" stroke="#222" stroke-width="1" fill="none"/></svg>
<div class="t" style="left:1648.40px;top:400px;font-size:15px;line-height:15px;color:#1a1a1a;transform:scaleX(0.9274);transform-origin:0 0;">[GET]Orders.API</div>
<svg class="r" style="left:1622.5px;top:424px;" width="20" height="20" viewBox="0 0 20 20"><defs><radialGradient id="agr" cx="0.5" cy="0.45" r="0.6"><stop offset="0" stop-color="#9a9a9a"/><stop offset="1" stop-color="#3a3a3a"/></radialGradient></defs>
<path d="M16.86 8.59 L19.16 8.37 L19.16 11.63 L16.86 11.41 L15.85 13.85 L17.63 15.32 L15.32 17.63 L13.85 15.85 L11.41 16.86 L11.63 19.16 L8.37 19.16 L8.59 16.86 L6.15 15.85 L4.68 17.63 L2.37 15.32 L4.15 13.85 L3.14 11.41 L0.84 11.63 L0.84 8.37 L3.14 8.59 L4.15 6.15 L2.37 4.68 L4.68 2.37 L6.15 4.15 L8.59 3.14 L8.37 0.84 L11.63 0.84 L11.41 3.14 L13.85 4.15 L15.32 2.37 L17.63 4.68 L15.85 6.15 Z" fill="#2f62d8"/><circle cx="10" cy="10" r="5.8" fill="#e8eef8"/><circle cx="10" cy="10" r="5" fill="url(#agr)"/>
<path d="M7 9.5 L8.3 8 L9.3 9.5 M10.8 9.5 L12 8 L13.2 9.5" stroke="#f0f0f0" stroke-width="1.2" fill="none"/><path d="M7.3 11.5 Q10 13.8 12.7 11.5" stroke="#222" stroke-width="1" fill="none"/></svg>
<div class="t" style="left:1648.40px;top:427px;font-size:15px;line-height:15px;color:#1a1a1a;transform:scaleX(0.9205);transform-origin:0 0;">[GET]Orders1.API</div>
<svg class="r" style="left:1622.5px;top:452px;" width="20" height="20" viewBox="0 0 20 20"><defs><radialGradient id="agr" cx="0.5" cy="0.45" r="0.6"><stop offset="0" stop-color="#9a9a9a"/><stop offset="1" stop-color="#3a3a3a"/></radialGradient></defs>
<path d="M16.86 8.59 L19.16 8.37 L19.16 11.63 L16.86 11.41 L15.85 13.85 L17.63 15.32 L15.32 17.63 L13.85 15.85 L11.41 16.86 L11.63 19.16 L8.37 19.16 L8.59 16.86 L6.15 15.85 L4.68 17.63 L2.37 15.32 L4.15 13.85 L3.14 11.41 L0.84 11.63 L0.84 8.37 L3.14 8.59 L4.15 6.15 L2.37 4.68 L4.68 2.37 L6.15 4.15 L8.59 3.14 L8.37 0.84 L11.63 0.84 L11.41 3.14 L13.85 4.15 L15.32 2.37 L17.63 4.68 L15.85 6.15 Z" fill="#2f62d8"/><circle cx="10" cy="10" r="5.8" fill="#e8eef8"/><circle cx="10" cy="10" r="5" fill="url(#agr)"/>
<path d="M7 9.5 L8.3 8 L9.3 9.5 M10.8 9.5 L12 8 L13.2 9.5" stroke="#f0f0f0" stroke-width="1.2" fill="none"/><path d="M7.3 11.5 Q10 13.8 12.7 11.5" stroke="#222" stroke-width="1" fill="none"/></svg>
<div class="t" style="left:1648.40px;top:455px;font-size:15px;line-height:15px;color:#1a1a1a;transform:scaleX(0.9293);transform-origin:0 0;">[POST]Orders.API</div>
<svg class="r" style="left:1622.5px;top:479px;" width="20" height="20" viewBox="0 0 20 20"><defs><radialGradient id="agr" cx="0.5" cy="0.45" r="0.6"><stop offset="0" stop-color="#9a9a9a"/><stop offset="1" stop-color="#3a3a3a"/></radialGradient></defs>
<path d="M16.86 8.59 L19.16 8.37 L19.16 11.63 L16.86 11.41 L15.85 13.85 L17.63 15.32 L15.32 17.63 L13.85 15.85 L11.41 16.86 L11.63 19.16 L8.37 19.16 L8.59 16.86 L6.15 15.85 L4.68 17.63 L2.37 15.32 L4.15 13.85 L3.14 11.41 L0.84 11.63 L0.84 8.37 L3.14 8.59 L4.15 6.15 L2.37 4.68 L4.68 2.37 L6.15 4.15 L8.59 3.14 L8.37 0.84 L11.63 0.84 L11.41 3.14 L13.85 4.15 L15.32 2.37 L17.63 4.68 L15.85 6.15 Z" fill="#2f62d8"/><circle cx="10" cy="10" r="5.8" fill="#e8eef8"/><circle cx="10" cy="10" r="5" fill="url(#agr)"/>
<path d="M7 9.5 L8.3 8 L9.3 9.5 M10.8 9.5 L12 8 L13.2 9.5" stroke="#f0f0f0" stroke-width="1.2" fill="none"/><path d="M7.3 11.5 Q10 13.8 12.7 11.5" stroke="#222" stroke-width="1" fill="none"/></svg>
<div class="t" style="left:1648.40px;top:482px;font-size:15px;line-height:15px;color:#1a1a1a;transform:scaleX(0.9389);transform-origin:0 0;">[PUT]Orders.API</div>
</body></html>
